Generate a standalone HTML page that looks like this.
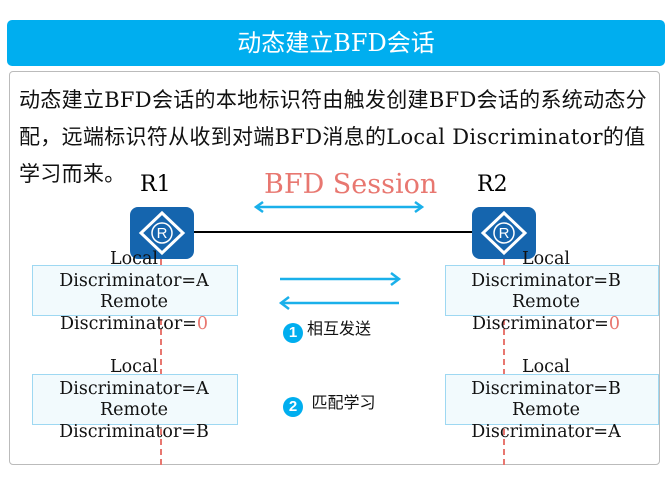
<!DOCTYPE html>
<html><head><meta charset="utf-8"><style>
body{margin:0;width:672px;height:485px;background:#fff;position:relative;overflow:hidden;font-family:"DejaVu Serif","Noto Serif CJK SC",serif}
.hdr{position:absolute;left:7px;top:20px;width:658px;height:46px;background:#00AEEF;border-radius:5px;color:#fff;font-size:24px;text-align:center;line-height:46px;font-family:"DejaVu Serif","Noto Sans CJK SC",serif}
.box{position:absolute;left:9px;top:71px;width:649px;height:392px;border:1px solid #bbb;border-radius:4px}
.txt{position:absolute;left:19px;top:82px;width:660px;white-space:nowrap;font-size:21px;letter-spacing:0.3px;line-height:37px;color:#111;font-family:"DejaVu Serif","Noto Sans CJK SC",serif}
.d{position:absolute;width:0;border-left:2px dashed #E87770}
.r{position:absolute;width:64px;height:52px;background:#1565AE;border-radius:8px}
.nb{position:absolute;width:204px;height:49px;background:#F2FAFD;border:1px solid #9ED8F2}
.lab{position:absolute;width:220px;text-align:center;font-size:17.5px;line-height:21.6px;color:#111}
.cn{position:absolute;font-size:16px;font-family:"Liberation Sans","Noto Sans CJK SC",sans-serif;color:#111}
.c{display:inline-block;width:20px;height:20px;border-radius:50%;background:#00AEEF;color:#fff;font-weight:bold;text-align:center;line-height:20px;font-size:15px;margin-right:4px;vertical-align:-3px}
</style></head><body>
<div class="hdr">动态建立BFD会话</div>
<div class="box"></div>
<div class="txt">动态建立BFD会话的本地标识符由触发创建BFD会话的系统动态分<br>配，远端标识符从收到对端BFD消息的Local Discriminator的值<br>学习而来。</div>
<div style="position:absolute;left:140px;top:172px;font-size:22px">R1</div>
<div style="position:absolute;left:477px;top:172px;font-size:22px">R2</div>
<div style="position:absolute;left:264px;top:169px;font-size:27px;color:#E87770">BFD Session</div>
<div style="position:absolute;left:190px;top:231px;width:290px;height:2px;background:#000"></div>
<div class="d" style="left:160px;top:259px;height:206px"></div>
<div class="d" style="left:503px;top:259px;height:206px"></div>
<svg style="position:absolute;left:0;top:0" width="672" height="485">
<g stroke="#1AB0EA" stroke-width="2.5" fill="none">
<line x1="256" y1="207" x2="422" y2="207"/><polyline points="263,202 256,207 263,212"/><polyline points="415,202 422,207 415,212"/>
<line x1="280" y1="279" x2="399" y2="279"/><polyline points="391,273 399,279 391,285"/>
<line x1="281" y1="303" x2="399" y2="303"/><polyline points="289,297 281,303 289,309"/>
</g></svg>
<div class="r" style="left:130px;top:207px"></div>
<div class="r" style="left:472px;top:207px"></div>
<svg style="position:absolute;left:0;top:0" width="672" height="485">
<g fill="none" stroke="#fff" stroke-width="3"><polygon points="162,213 183,233 162,253 141,233"/><polygon points="504,213 525,233 504,253 483,233"/></g>
<g fill="none" stroke="#fff" stroke-width="1.5"><circle cx="162" cy="233" r="10"/><circle cx="504" cy="233" r="10"/></g>
<g fill="#fff" font-family="Liberation Sans" font-size="15" text-anchor="middle"><text x="162" y="238">R</text><text x="504" y="238">R</text></g>
</svg>
<div class="nb" style="left:32px;top:265px"></div>
<div class="nb" style="left:32px;top:374px"></div>
<div class="nb" style="left:445px;top:265px;width:212px"></div>
<div class="nb" style="left:445px;top:374px;width:212px"></div>
<div class="lab" style="left:24px;top:249px">Local<br>Discriminator=A<br>Remote<br>Discriminator=<span style="color:#E87770">0</span></div>
<div class="lab" style="left:24px;top:357px">Local<br>Discriminator=A<br>Remote<br>Discriminator=B</div>
<div class="lab" style="left:436px;top:249px">Local<br>Discriminator=B<br>Remote<br>Discriminator=<span style="color:#E87770">0</span></div>
<div class="lab" style="left:436px;top:357px">Local<br>Discriminator=B<br>Remote<br>Discriminator=A</div>
<div class="cn" style="left:283px;top:315px"><span class="c">1</span>相互发送</div>
<div class="cn" style="left:283px;top:389px"><span class="c">2</span> 匹配学习</div>
</body></html>
